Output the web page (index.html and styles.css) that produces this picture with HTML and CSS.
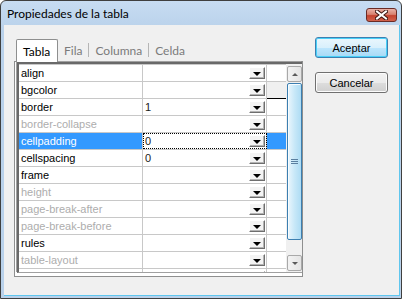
FILE: index.html
```html
<!DOCTYPE html>
<html>
<head>
<meta charset="utf-8">
<link rel="stylesheet" href="styles.css">
</head>
<body>
<div class="window">
  <div class="titlebar">
    <span class="title">Propiedades de la tabla</span>
    <div class="close">
      <svg width="13" height="10" viewBox="0 0 13 10"><path d="M2 1.5 L11 8.5 M11 1.5 L2 8.5" stroke="#3b1410" stroke-width="4" stroke-linecap="square"/><path d="M2 1.5 L11 8.5 M11 1.5 L2 8.5" stroke="#ffffff" stroke-width="2" stroke-linecap="square"/></svg>
    </div>
  </div>
  <div class="client">
    <div class="main">
      <div class="tabs">
        <div class="tab active">Tabla</div>
        <div class="tab">Fila</div>
        <div class="sep"></div>
        <div class="tab">Columna</div>
        <div class="sep"></div>
        <div class="tab">Celda</div>
      </div>
      <div class="page">
        <div class="grid">
          <div class="rows">
            <div class="row"><div class="name">align</div><div class="val"><span class="v"></span><div class="dd"><i></i></div></div><div class="extra"></div></div>
            <div class="row"><div class="name">bgcolor</div><div class="val"><span class="v"></span><div class="dd"><i></i></div></div><div class="extra mark"></div></div>
            <div class="row"><div class="name">border</div><div class="val"><span class="v">1</span><div class="dd"><i></i></div></div><div class="extra"></div></div>
            <div class="row"><div class="name off">border-collapse</div><div class="val"><span class="v"></span><div class="dd"><i></i></div></div><div class="extra"></div></div>
            <div class="row sel"><div class="name">cellpadding</div><div class="val"><span class="v">0</span><div class="dd"><i></i></div></div><div class="extra"></div></div>
            <div class="row"><div class="name">cellspacing</div><div class="val"><span class="v">0</span><div class="dd"><i></i></div></div><div class="extra"></div></div>
            <div class="row"><div class="name">frame</div><div class="val"><span class="v"></span><div class="dd"><i></i></div></div><div class="extra"></div></div>
            <div class="row"><div class="name off">height</div><div class="val"><span class="v"></span><div class="dd"><i></i></div></div><div class="extra"></div></div>
            <div class="row"><div class="name off">page-break-after</div><div class="val"><span class="v"></span><div class="dd"><i></i></div></div><div class="extra"></div></div>
            <div class="row"><div class="name off">page-break-before</div><div class="val"><span class="v"></span><div class="dd"><i></i></div></div><div class="extra"></div></div>
            <div class="row"><div class="name">rules</div><div class="val"><span class="v"></span><div class="dd"><i></i></div></div><div class="extra"></div></div>
            <div class="row"><div class="name off">table-layout</div><div class="val"><span class="v"></span><div class="dd"><i></i></div></div><div class="extra"></div></div>
            <div class="row"><div class="name"></div><div class="val"><span class="v"></span><div class="dd"><i></i></div></div><div class="extra"></div></div>
          </div>
          <div class="scrollbar">
            <div class="sbtn up"><i></i></div>
            <div class="thumb"><div class="grip"></div></div>
            <div class="track"></div>
            <div class="sbtn down"><i></i></div>
          </div>
        </div>
      </div>
    </div>
    <div class="buttons">
      <button class="btn default">Aceptar</button>
      <button class="btn">Cancelar</button>
    </div>
  </div>
</div>
</body>
</html>
```
FILE: styles.css
```css
* { box-sizing: border-box; }
html, body { margin: 0; padding: 0; background: #ffffff; }
body { width: 402px; height: 299px; overflow: hidden; }

.window {
  width: 402px;
  height: 299px;
  border: 1px solid #3f3f3f;
  border-radius: 6px 6px 0 0;
  background: linear-gradient(#c7dcf2, #b9d1ea 30px, #b9d1ea);
  display: flex;
  flex-direction: column;
}

.titlebar {
  height: 24px;
  flex: none;
  display: flex;
  align-items: flex-start;
  padding: 0 4px 0 6px;
}
.title {
  font-family: Lato, sans-serif;
  font-size: 12px;
  color: #000;
  margin-top: 5px;
  line-height: 15px;
}
.close {
  margin-left: auto;
  margin-top: 7px;
  width: 31px;
  height: 14px;
  border: 1px solid #6a2b25;
  border-radius: 3px;
  background: linear-gradient(#e9b1a6, #d88270 45%, #c4432f 55%, #d1624c);
  display: flex;
  align-items: center;
  justify-content: center;
}
.close svg { display: block; }

.client {
  flex: 1;
  margin: 0 1px 2px 3px;
  background: #f0f0f0;
  border-right: 1px solid #5fc6ee;
  border-bottom: 1px solid #5fc6ee;
  display: flex;
  align-items: flex-start;
}

.main {
  padding: 14px 0 0 10px;
  display: flex;
  flex-direction: column;
}

.tabs {
  display: flex;
  align-items: center;
  height: 22px;
  padding-left: 2px;
  font-family: Lato, sans-serif;
  font-size: 12px;
}
.tab {
  padding: 0 6px;
  color: #7b7b7b;
  line-height: 15px;
}
.tab.active {
  align-self: flex-start;
  width: 42px;
  height: 23px;
  padding: 4px 0 0 6px;
  color: #000;
  background: #ffffff;
  border: 1px solid #8e8f8f;
  border-bottom: none;
  border-radius: 2px 2px 0 0;
  position: relative;
  z-index: 1;
}
.sep {
  width: 1px;
  height: 14px;
  background: #b5b5b5;
}

.page {
  width: 289px;
  height: 216px;
  border: 1px solid #8e8f8f;
  background: #ffffff;
  padding: 0 0 3px 2px;
}

.grid {
  width: 285px;
  height: 211px;
  border-top: 2px solid #696969;
  border-left: 2px solid #696969;
  border-bottom: 1px solid #a0a0a0;
  box-shadow: -1px -1px 0 #a0a0a0;
  display: flex;
  font-family: "Liberation Sans", Arial, sans-serif;
  font-size: 11px;
}

.rows {
  width: 267px;
  overflow: hidden;
  border-top: 1px solid #c8c8c8;
  background: #ffffff;
}
.row {
  display: flex;
  height: 17px;
  border-bottom: 1px solid #c8c8c8;
}
.name {
  width: 124px;
  border-right: 1px solid #c8c8c8;
  padding-left: 2px;
  line-height: 16px;
  color: #000;
  white-space: nowrap;
}
.name.off { color: #adadad; }
.val {
  width: 124px;
  border-right: 1px solid #c8c8c8;
  display: flex;
  align-items: flex-start;
  padding-left: 2px;
  line-height: 16px;
  color: #1a1a1a;
}
.v { flex: 1; }
.dd {
  width: 16px;
  height: 12px;
  margin: 2px 1px 0 0;
  background: #f4f4f4;
  border: 1px solid;
  border-color: #ffffff #6e6e6e #6e6e6e #ffffff;
  box-shadow: inset -1px -1px 0 #b4b4b4;
  display: flex;
  align-items: center;
  justify-content: center;
}
.dd i {
  width: 0;
  height: 0;
  border-left: 4px solid transparent;
  border-right: 4px solid transparent;
  border-top: 4px solid #000;
  margin-top: 1px;
}
.extra { width: 19px; }
.extra.mark {
  background: #f0f0f0;
  border-bottom: 1px solid #000;
  margin-bottom: -1px;
}

.row.sel .name { background: #3399ff; color: #fff; }
.row.sel .extra { background: #3399ff; }
.row.sel .val { outline: 1px dotted #000; outline-offset: -1px; }

.scrollbar {
  width: 16px;
  background: #f0f0f0;
  display: flex;
  flex-direction: column;
  padding: 2px 0 1px 1px;
}
.sbtn {
  height: 16px;
  border: 1px solid #a9a9a9;
  border-radius: 2px;
  background: linear-gradient(90deg, #f3f3f3, #e4e4e4);
  display: flex;
  align-items: center;
  justify-content: center;
}
.sbtn i {
  width: 0;
  height: 0;
  border-left: 3px solid transparent;
  border-right: 3px solid transparent;
}
.sbtn.up i { border-bottom: 3px solid #5a5a5a; }
.sbtn.down i { border-top: 3px solid #5a5a5a; }
.thumb {
  margin-top: 1px;
  height: 157px;
  border: 1px solid #3c7fb1;
  border-radius: 2px;
  background: linear-gradient(90deg, #eaf6fd, #c8e8f8 50%, #aedcf4);
  box-shadow: inset 1px 1px 0 #f7fcff;
  display: flex;
  align-items: center;
  justify-content: center;
}
.grip {
  width: 7px;
  height: 5px;
  border-top: 1px solid #5a7fa0;
  border-bottom: 1px solid #5a7fa0;
  background: linear-gradient(#5a7fa0, #5a7fa0) center / 100% 1px no-repeat;
}
.track { flex: 1; }

.buttons {
  margin-left: 12px;
  padding-top: 12px;
  display: flex;
  flex-direction: column;
  gap: 14px;
}
.btn {
  width: 73px;
  height: 21px;
  margin: 0;
  padding: 0;
  font-family: "Liberation Sans", Arial, sans-serif;
  font-size: 11px;
  color: #000;
  border: 1px solid #707070;
  border-radius: 3px;
  background: linear-gradient(#f2f2f2, #ebebeb 50%, #dddddd 51%, #cfcfcf);
  box-shadow: inset 0 0 0 1px #fcfcfc;
}
.btn.default {
  border-color: #3c7fb1;
  background: linear-gradient(#eaf6fd, #d9f0fc 50%, #bee6fd 51%, #a7d9f5);
  box-shadow: inset 0 0 0 1px #48d0f8;
}
```
